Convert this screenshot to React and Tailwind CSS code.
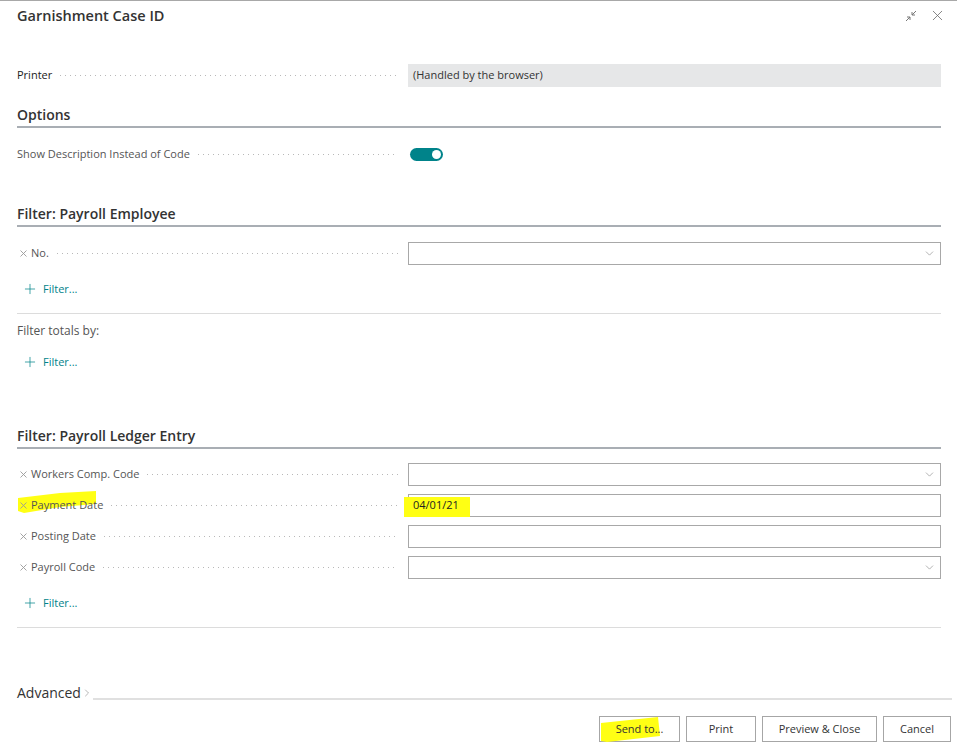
import { X, ChevronDown, ChevronRight, Plus } from "lucide-react";

const dots =
  "flex-1 h-[3px] mx-[6px] bg-[radial-gradient(circle,#b8b8b8_0.7px,transparent_0.9px)] bg-[length:5px_3px] bg-repeat-x";

function Leader({ children, width = "w-[391px]" }) {
  return (
    <div className={`${width} flex items-center pr-[4px]`}>
      {children}
      <div className={dots}></div>
    </div>
  );
}

function FilterLabel({ text, highlight }) {
  return (
    <div className="relative flex items-center text-[11px] text-[#555] pl-[3px]">
      {highlight && (
        <svg
          className="absolute left-[1px] -top-[6px]"
          width="80"
          height="24"
          viewBox="0 0 80 24"
        >
          <polygon
            points="0,7 42,2 78,0 78,13 42,16 6,22 0,20"
            fill="#ffff14"
          />
        </svg>
      )}
      <svg
        className="relative mr-[4px]"
        width="7"
        height="7"
        viewBox="0 0 7 7"
        stroke="#9a9a9a"
        strokeWidth="0.9"
      >
        <path d="M0.5 0.5 L6.5 6.5 M6.5 0.5 L0.5 6.5" />
      </svg>
      <span className="relative">{text}</span>
    </div>
  );
}

function FilterRow({ label, highlight, select, value }) {
  return (
    <div className="flex items-center h-[23px]">
      <Leader>
        <FilterLabel text={label} highlight={highlight} />
      </Leader>
      <div className="relative flex-1 h-[23px] border border-[#a8a8a8] flex items-center px-[4px]">
        {value && (
          <>
            <div className="absolute -left-[5px] top-[2px] w-[66px] h-[20px] bg-[#ffff14]"></div>
            <span className="relative text-[11px] text-[#222]">{value}</span>
          </>
        )}
        {select && (
          <ChevronDown
            className="ml-auto text-[#8a8a8a]"
            size={13}
            strokeWidth={1.2}
          />
        )}
      </div>
    </div>
  );
}

function AddFilter() {
  return (
    <div className="flex items-center h-[20px] pl-[5px] text-[#00838a] text-[11px]">
      <Plus size={16} strokeWidth={1.1} />
      <span className="ml-[5px]">Filter...</span>
    </div>
  );
}

function Heading({ children }) {
  return (
    <div className="text-[14px] leading-[20px] font-semibold text-[#333] pb-[1px] border-b-2 border-[#a9aeb4]">
      {children}
    </div>
  );
}

function Btn({ children, w, highlight }) {
  return (
    <button
      className={`${w} relative h-[26px] border border-[#a6a6a6] bg-white text-[11px] text-[#333] flex items-center justify-center`}
    >
      {highlight && (
        <svg
          className="absolute left-[1px] top-0"
          width="62"
          height="26"
          viewBox="0 0 62 26"
        >
          <polygon points="0,6 57,0 59,19 6,25 0,24" fill="#ffff14" />
        </svg>
      )}
      <span className="relative">{children}</span>
    </button>
  );
}

export default function App() {
  return (
    <div className="w-[957px] h-[749px] bg-white border-t border-[#a8a8a8] flex flex-col overflow-hidden font-['Open_Sans',sans-serif]">
      <div className="flex items-center justify-between pl-[17px] pr-[11px] pt-[4px] h-[25px] shrink-0">
        <div className="text-[14.5px] leading-[20px] font-semibold text-[#333]">
          Garnishment Case ID
        </div>
        <div className="flex items-center gap-[12px] text-[#666]">
          <svg width="12" height="12" viewBox="0 0 12 12" fill="none" stroke="#777" strokeWidth="1">
            <path d="M11 1 L7 5 M7 2 L7 5 L10 5" />
            <path d="M1 11 L5 7 M2 7 L5 7 L5 10" />
          </svg>
          <X size={17} strokeWidth={1.1} />
        </div>
      </div>

      <div className="flex-1 flex flex-col pl-[17px] pr-[16px] overflow-hidden">
        <div className="flex items-center h-[23px] mt-[38px]">
          <Leader>
            <span className="text-[11px] text-[#222]">Printer</span>
          </Leader>
          <div className="flex-1 h-[23px] bg-[#e6e7e8] flex items-center px-[5px] text-[11px] text-[#333]">
            (Handled by the browser)
          </div>
        </div>

        <div className="mt-[18px]">
          <Heading>Options</Heading>
        </div>

        <div className="flex items-center h-[23px] mt-[15px]">
          <Leader>
            <span className="text-[11px] text-[#555]">
              Show Description Instead of Code
            </span>
          </Leader>
          <div className="flex-1 flex items-center pl-[2px]">
            <div className="w-[33px] h-[13px] rounded-full bg-[#00838a] flex items-center justify-end pr-[2px]">
              <div className="w-[9px] h-[9px] rounded-full bg-white"></div>
            </div>
          </div>
        </div>

        <div className="mt-[38px]">
          <Heading>Filter: Payroll Employee</Heading>
        </div>

        <div className="mt-[15px]">
          <FilterRow label="No." select />
        </div>
        <div className="mt-[14px]">
          <AddFilter />
        </div>

        <div className="mt-[14px] border-b border-[#dcdcdc]"></div>

        <div className="mt-[7px] text-[12px] leading-[20px] text-[#555]">
          Filter totals by:
        </div>
        <div className="mt-[11px]">
          <AddFilter />
        </div>

        <div className="mt-[54px]">
          <Heading>Filter: Payroll Ledger Entry</Heading>
        </div>

        <div className="mt-[14px] flex flex-col gap-[8px]">
          <FilterRow label="Workers Comp. Code" select />
          <FilterRow label="Payment Date" highlight value="04/01/21" />
          <FilterRow label="Posting Date" />
          <FilterRow label="Payroll Code" select />
        </div>
        <div className="mt-[14px]">
          <AddFilter />
        </div>

        <div className="mt-[14px] border-b border-[#dcdcdc]"></div>
      </div>

      <div className="shrink-0 flex items-end h-[20px] pl-[17px] pr-[5px]">
        <span className="text-[14px] leading-[14px] text-[#333]">Advanced</span>
        <ChevronRight
          className="text-[#888] mb-[1px]"
          size={12}
          strokeWidth={1.2}
        />
        <div className="flex-1 border-b-2 border-[#e0e0e0]"></div>
      </div>

      <div className="shrink-0 h-[49px] flex items-start justify-end pt-[16px] pr-[6px] gap-[6px]">
        <Btn w="w-[81px]" highlight>
          Send to...
        </Btn>
        <Btn w="w-[70px]">Print</Btn>
        <Btn w="w-[115px]">Preview &amp; Close</Btn>
        <Btn w="w-[68px]">Cancel</Btn>
      </div>
    </div>
  );
}
